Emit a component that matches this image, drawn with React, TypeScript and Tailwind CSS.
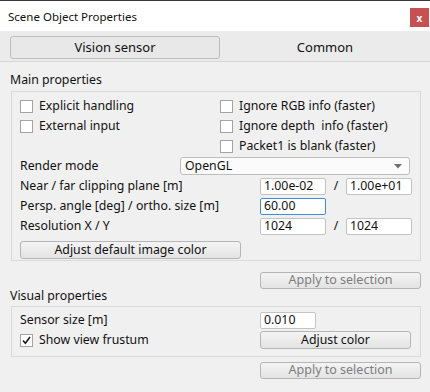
import React from 'react';

const font = { fontFamily: '"Noto Sans", "Liberation Sans", sans-serif' };

const CheckBox = ({ checked = false }: { checked?: boolean }) => (
    <span className="w-[13px] h-[13px] border border-[#a3a3a3] bg-white flex items-center justify-center shrink-0">
        {checked && (
            <svg width="9" height="9" viewBox="0 0 9 9">
                <path d="M1 4.5 L3.4 7.2 L8 1" fill="none" stroke="#1a1a1a" strokeWidth="1.6" />
            </svg>
        )}
    </span>
);

const Check = ({ label, checked }: { label: string; checked?: boolean }) => (
    <div className="h-[20px] flex items-center gap-[6px]">
        <CheckBox checked={checked} />
        <span className="whitespace-pre">{label}</span>
    </div>
);

const Input = ({ value, width = 'w-[66px]', focus = false }: { value: string; width?: string; focus?: boolean }) => (
    <div
        className={`${width} h-[17px] bg-white rounded-[2px] border flex items-center pl-[3px] leading-none ${
            focus ? 'border-[#3d8ee0]' : 'border-[#c4c4c4]'
        }`}
    >
        {value}
    </div>
);

const Button = ({ label, width, disabled = false }: { label: string; width: string; disabled?: boolean }) => (
    <div
        className={`${width} h-[17px] rounded-[3px] border border-[#b5b5b5] bg-gradient-to-b from-[#f4f4f4] to-[#e3e3e3] flex items-center justify-center leading-none ${
            disabled ? 'text-[#7d7d7d] text-[12.5px]' : 'text-[#111]'
        }`}
    >
        {label}
    </div>
);

const Row = ({ label, children }: { label: string; children?: React.ReactNode }) => (
    <div className="h-[20px] flex items-center">
        <span className="w-[240px]">{label}</span>
        {children}
    </div>
);

const App = () => {
    return (
        <div className="w-[430px] h-[392px] bg-[#f0f0f0] text-[12.3px] text-[#111] flex flex-col overflow-hidden" style={font}>
            <div className="h-[1px] bg-[#3a3a3a]" />
            <div className="h-[30px] bg-white flex items-start justify-between pl-[8px] pr-[1px]">
                <span className="mt-[7px] text-[11.5px]">Scene Object Properties</span>
                <div className="mt-[7px] w-[19px] h-[19px] bg-[#c75050] text-white text-[10px] font-bold flex items-center justify-center leading-none">
                    x
                </div>
            </div>
            <div className="h-[31px] bg-[#ebebeb] border-b border-[#d6d6d6] flex items-start pl-[10px]">
                <div className="mt-[5px] w-[210px] h-[23px] rounded-[3px] border border-[#bdbdbd] bg-[#e8e8e8] flex items-center justify-center text-[13px]">
                    Vision sensor
                </div>
                <div className="mt-[5px] w-[210px] h-[23px] flex items-center justify-center text-[13px]">Common</div>
            </div>

            <div className="pl-[10px] flex flex-col">
                <div className="h-[29px] flex items-end pb-[2px]">Main properties</div>
                <div className="ml-[1px] w-[410px] border border-[#dadada] pt-[4px] pl-[8px] pb-[1px] flex flex-col">
                    <div className="flex">
                        <div className="w-[200px] flex flex-col">
                            <Check label="Explicit handling" />
                            <Check label="External input" />
                        </div>
                        <div className="flex flex-col">
                            <Check label="Ignore RGB info (faster)" />
                            <Check label="Ignore depth  info (faster)" />
                            <Check label="Packet1 is blank (faster)" />
                        </div>
                    </div>
                    <div className="h-[20px] flex items-center">
                        <span className="w-[160px]">Render mode</span>
                        <div className="w-[230px] h-[18px] rounded-[3px] border border-[#bdbdbd] bg-[#fbfbfb] flex items-center justify-between pl-[4px] pr-[7px] leading-none">
                            <span>OpenGL</span>
                            <svg width="8" height="5" viewBox="0 0 8 5">
                                <path d="M0 0 H8 L4 4.5 Z" fill="#6e6e6e" />
                            </svg>
                        </div>
                    </div>
                    <Row label="Near / far clipping plane [m]">
                        <Input value="1.00e-02" />
                        <span className="w-[20px] text-center">/</span>
                        <Input value="1.00e+01" />
                    </Row>
                    <Row label="Persp. angle [deg] / ortho. size [m]">
                        <Input value="60.00" focus />
                    </Row>
                    <Row label="Resolution X / Y">
                        <Input value="1024" />
                        <span className="w-[20px] text-center">/</span>
                        <Input value="1024" />
                    </Row>
                    <div className="mt-[5px]">
                        <Button label="Adjust default image color" width="w-[221px] h-[18px]" />
                    </div>
                </div>
                <div className="mt-[11px] pl-[250px]">
                    <Button label="Apply to selection" width="w-[161px]" disabled />
                </div>

                <div className="h-[17px] flex items-end pb-[1px]">Visual properties</div>
                <div className="ml-[1px] w-[410px] border border-[#dadada] pt-[3px] pl-[8px] pb-[6px] flex flex-col">
                    <Row label="Sensor size [m]">
                        <Input value="0.010" width="w-[56px]" />
                    </Row>
                    <div className="h-[20px] flex items-center">
                        <div className="w-[240px] flex items-center gap-[6px]">
                            <CheckBox checked />
                            <span>Show view frustum</span>
                        </div>
                        <Button label="Adjust color" width="w-[151px] h-[18px]" />
                    </div>
                </div>
                <div className="mt-[5px] pl-[250px]">
                    <Button label="Apply to selection" width="w-[161px]" disabled />
                </div>
            </div>
        </div>
    );
};

export default App;
